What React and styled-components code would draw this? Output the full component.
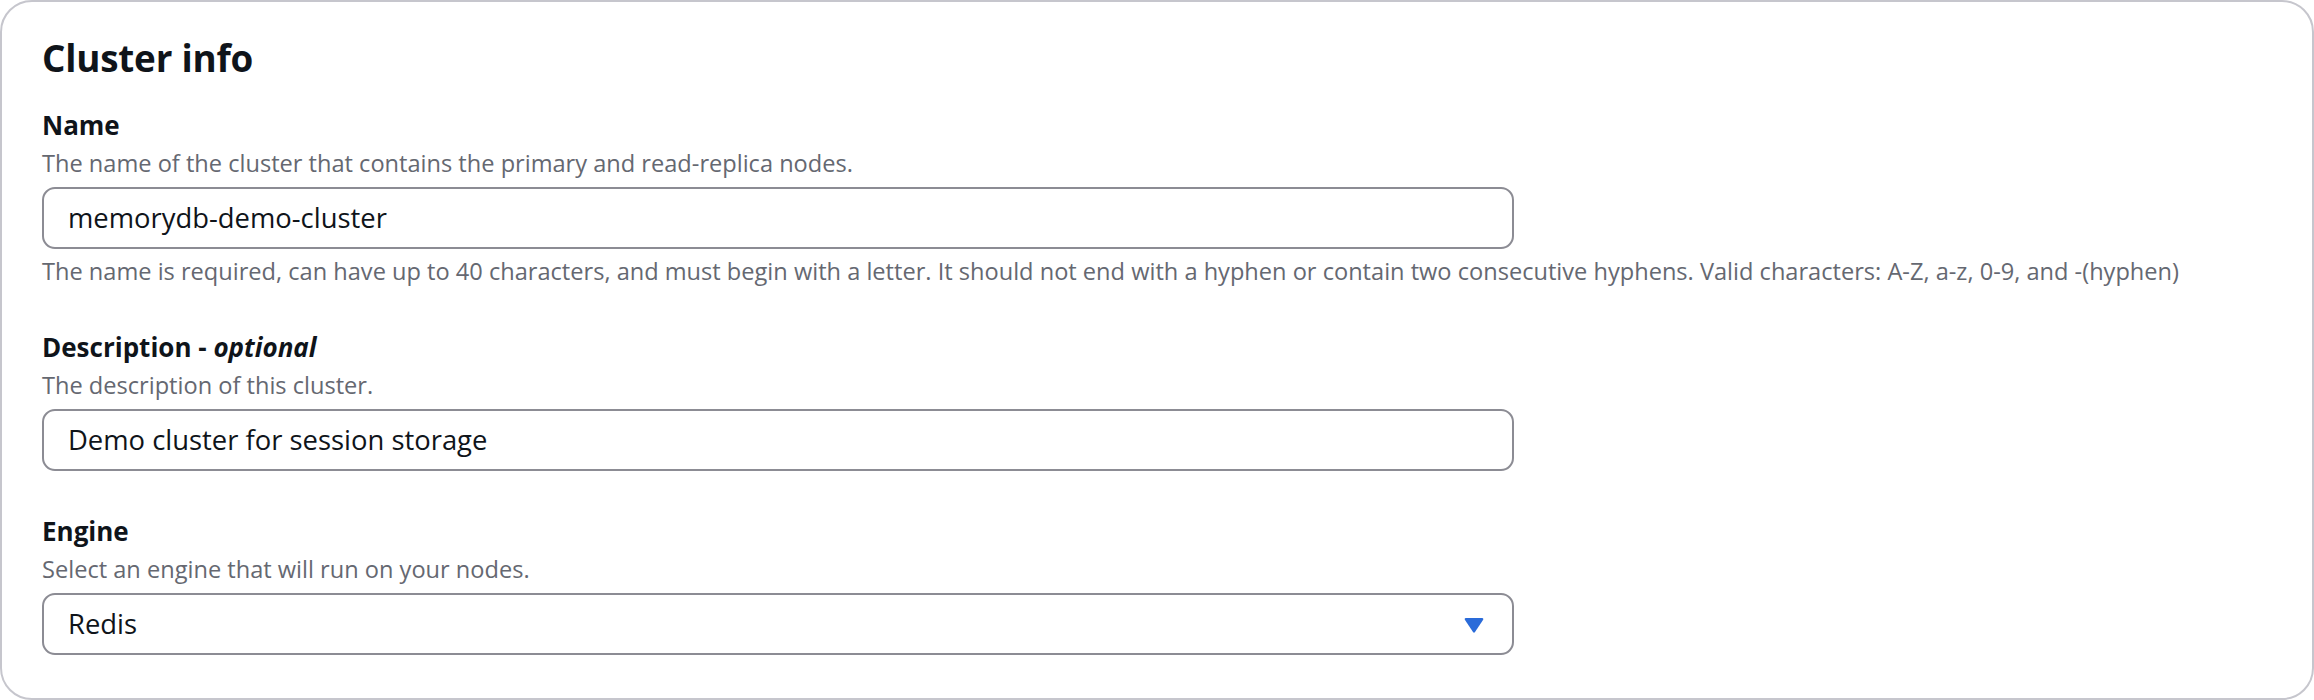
import React from "react";
import styled, { createGlobalStyle } from "styled-components";

const Global = createGlobalStyle`
  html, body { margin: 0; padding: 0; background: #ffffff; }
  body { font-family: "Open Sans", "Noto Sans", Arial, sans-serif; color: #0f141a; }
  * { box-sizing: border-box; }
`;

const Card = styled.section`
  width: 2314px;
  height: 700px;
  border: 2px solid #c6c6cd;
  border-radius: 32px;
  background: #ffffff;
  padding: 32px 40px 0 40px;
  display: flex;
  flex-direction: column;
`;

const Title = styled.h2`
  margin: 0 0 29px 0;
  font-size: 36.8px;
  line-height: 48px;
  font-weight: 700;
  color: #0f141a;
  letter-spacing: -0.2px;
`;

const Form = styled.div`
  display: flex;
  flex-direction: column;
  gap: 46px;
`;

const Field = styled.div`
  display: flex;
  flex-direction: column;
`;

const Label = styled.label`
  font-size: 26px;
  line-height: 28px;
  font-weight: 700;
  color: #0f141a;
`;

const Optional = styled.i`
  font-weight: 700;
  font-style: italic;
`;

const Description = styled.div`
  font-size: 23.6px;
  line-height: 32px;
  color: #656871;
  margin: 8px 0 8px 0;
`;

const Hint = styled.div`
  font-size: 23.6px;
  line-height: 32px;
  color: #656871;
  margin-top: 6px;
  white-space: nowrap;
`;

const Control = styled.div`
  width: 1472px;
  height: 62px;
  border: 2px solid #8c8c94;
  border-radius: 13px;
  padding: 0 28px 0 24px;
  display: flex;
  align-items: center;
  justify-content: space-between;
  font-size: 27.4px;
  color: #0f141a;
`;

const Value = styled.span`
  line-height: 36px;
`;

const Caret = styled.svg`
  width: 20px;
  height: 16px;
  margin-top: 2px;
  flex: none;
`;

export default function App() {
  return (
    <>
      <Global />
      <Card>
        <Title>Cluster info</Title>
        <Form>
          <Field>
            <Label>Name</Label>
            <Description>The name of the cluster that contains the primary and read-replica nodes.</Description>
            <Control>
              <Value>memorydb-demo-cluster</Value>
            </Control>
            <Hint>
              The name is required, can have up to 40 characters, and must begin with a letter. It should not end with a hyphen or contain two consecutive hyphens. Valid characters: A-Z, a-z, 0-9, and -(hyphen)
            </Hint>
          </Field>
          <Field>
            <Label>
              Description - <Optional>optional</Optional>
            </Label>
            <Description>The description of this cluster.</Description>
            <Control>
              <Value>Demo cluster for session storage</Value>
            </Control>
          </Field>
          <Field>
            <Label>Engine</Label>
            <Description>Select an engine that will run on your nodes.</Description>
            <Control>
              <Value>Redis</Value>
              <Caret viewBox="0 0 20 16" aria-hidden="true">
                <path d="M2 1 H18 Q20 1 19 3 L11 15 Q10 16.5 9 15 L1 3 Q0 1 2 1 Z" fill="#2a6bd9" />
              </Caret>
            </Control>
          </Field>
        </Form>
      </Card>
    </>
  );
}
